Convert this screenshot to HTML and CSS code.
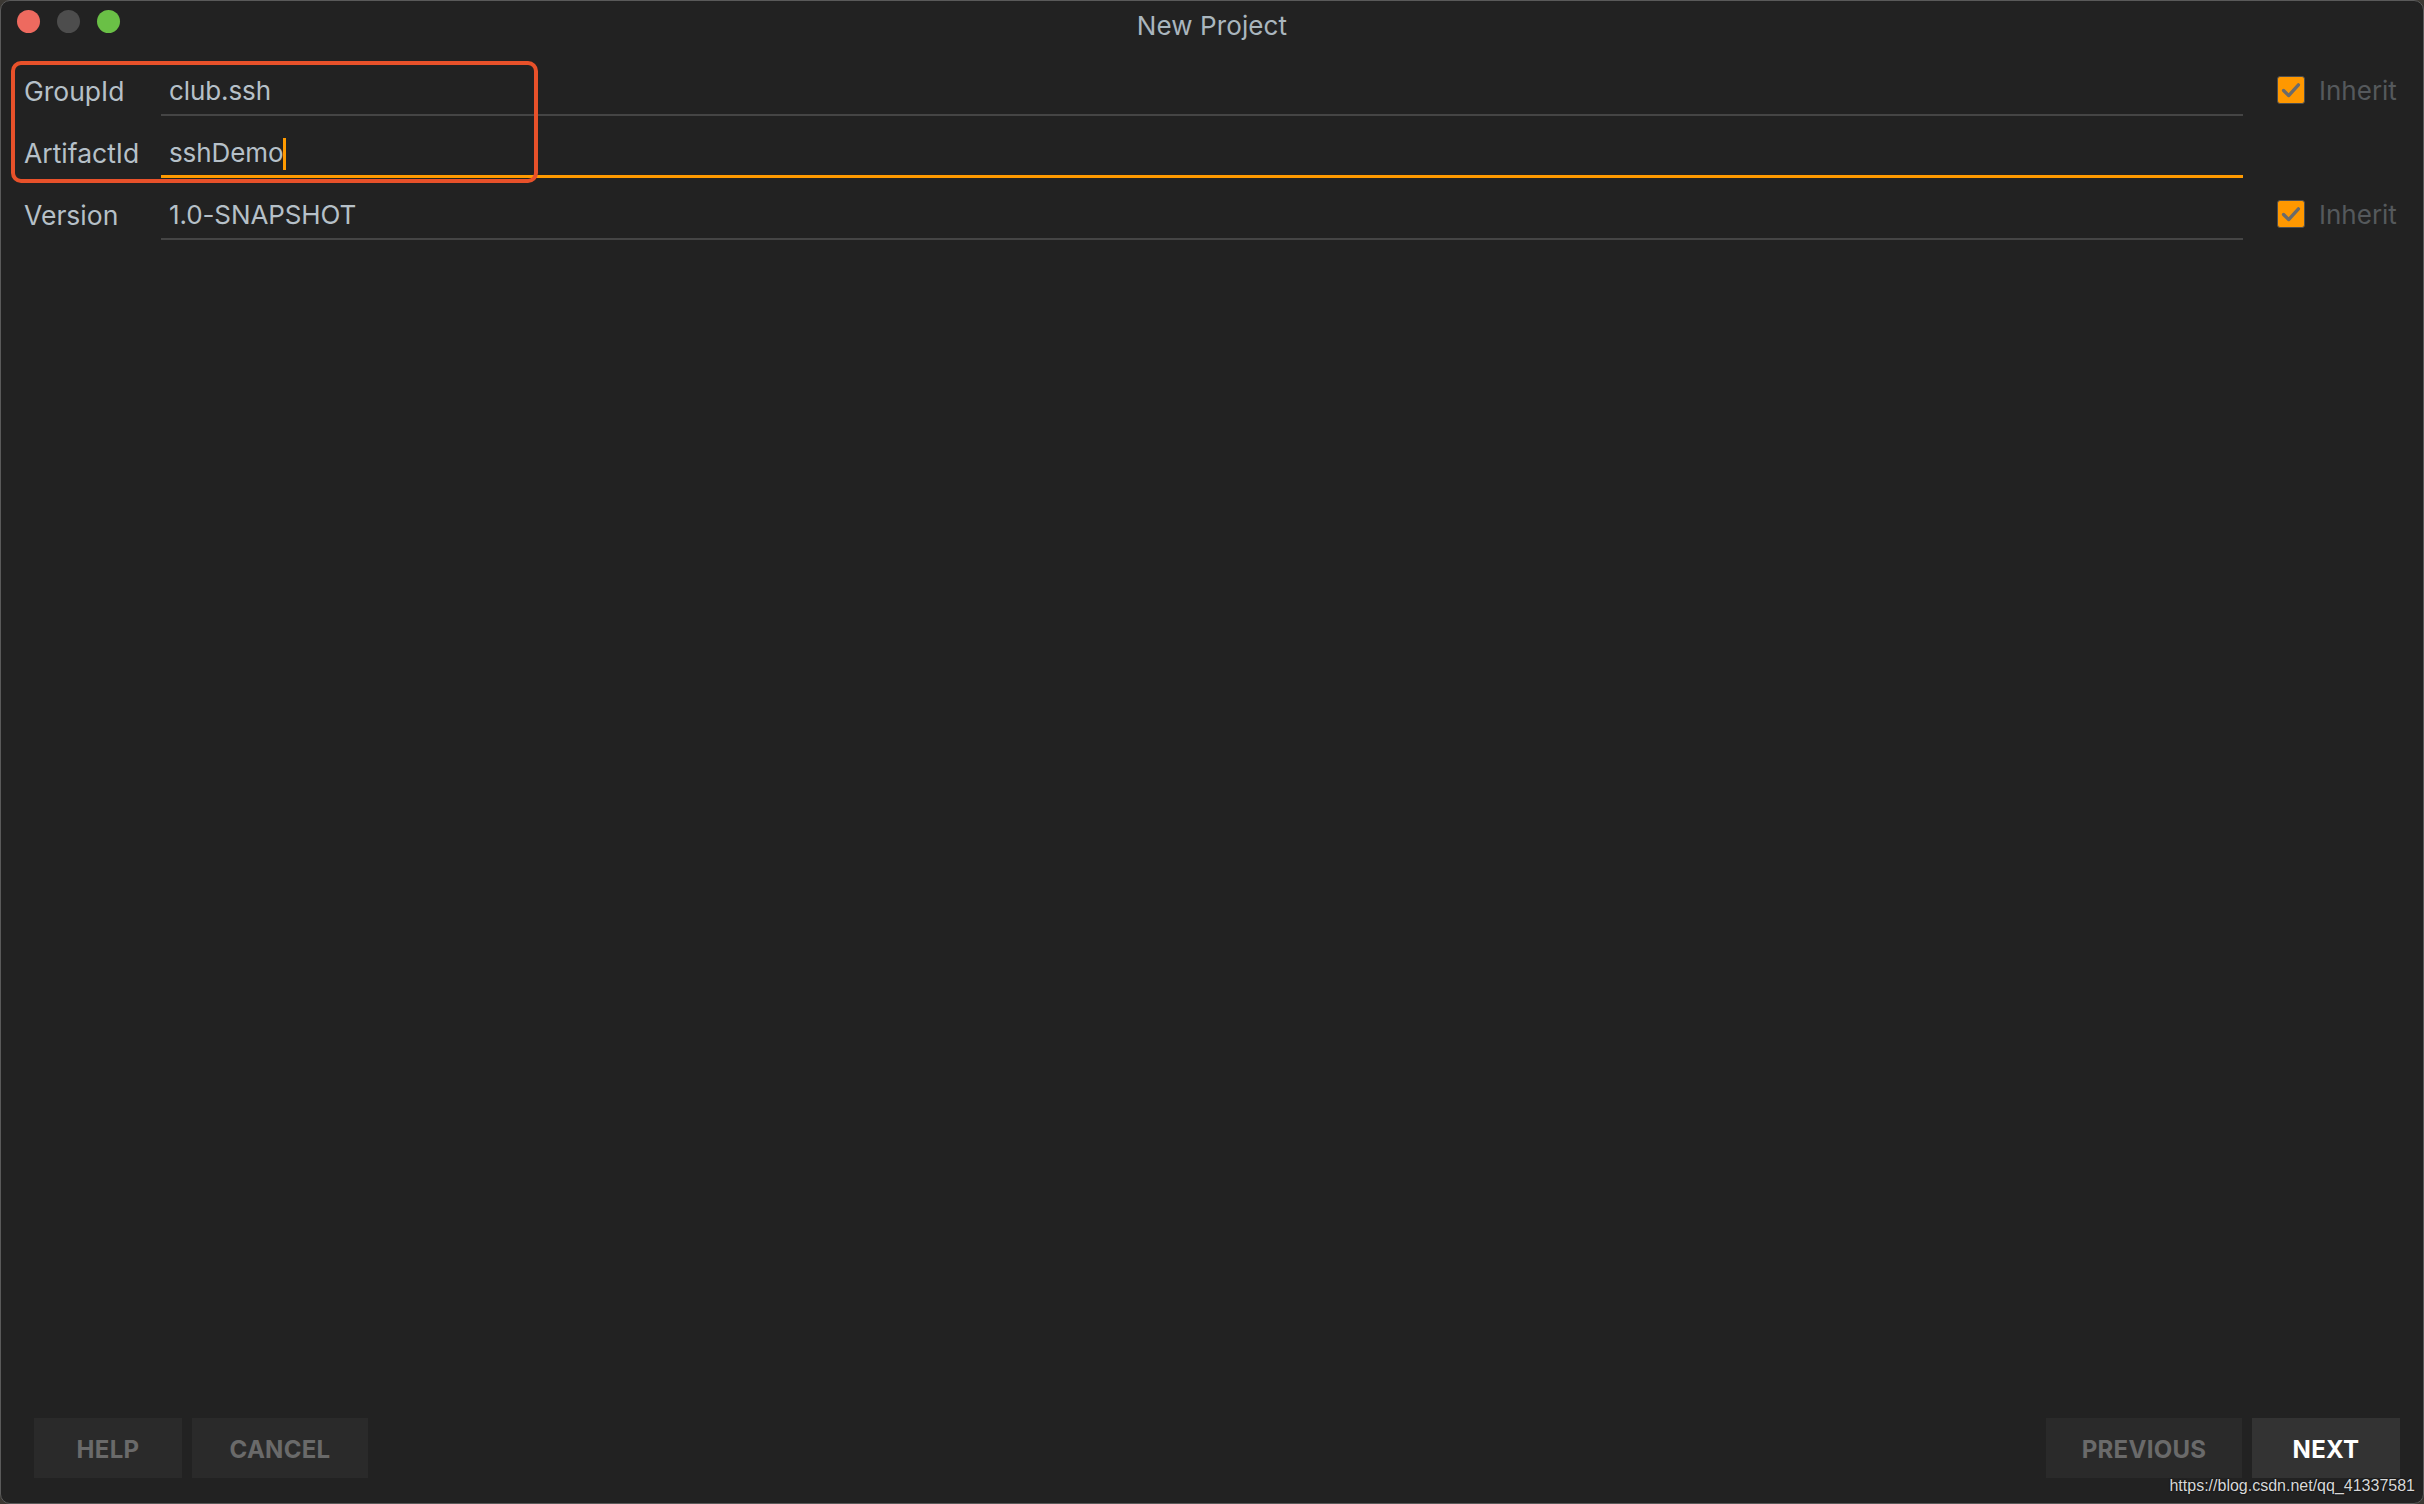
FILE: index.html
```html
<!DOCTYPE html>
<html lang="en">
<head>
<meta charset="utf-8">
<title>New Project</title>
<link rel="stylesheet" href="styles.css">
</head>
<body>
<div class="window">
  <header class="titlebar">
    <div class="lights">
      <span class="light red"></span>
      <span class="light grey"></span>
      <span class="light green"></span>
    </div>
    <div class="title">New Project</div>
    <div class="spacer"></div>
  </header>

  <main class="form">
    <div class="highlight"></div>
    <div class="row">
      <label class="label">GroupId</label>
      <div class="field">club.ssh</div>
      <div class="inherit">
        <span class="check">
          <svg viewBox="0 0 28 28" width="28" height="28"><path d="M6 14.5 L11.5 20 L22 8.5" fill="none" stroke="#6b6b6b" stroke-width="3.6" stroke-linecap="round" stroke-linejoin="round"/></svg>
        </span>
        <span class="inherit-text">Inherit</span>
      </div>
    </div>
    <div class="row">
      <label class="label">ArtifactId</label>
      <div class="field active">sshDemo<span class="caret"></span></div>
      <div class="inherit"></div>
    </div>
    <div class="row">
      <label class="label">Version</label>
      <div class="field">1.0-SNAPSHOT</div>
      <div class="inherit">
        <span class="check">
          <svg viewBox="0 0 28 28" width="28" height="28"><path d="M6 14.5 L11.5 20 L22 8.5" fill="none" stroke="#6b6b6b" stroke-width="3.6" stroke-linecap="round" stroke-linejoin="round"/></svg>
        </span>
        <span class="inherit-text">Inherit</span>
      </div>
    </div>
  </main>

  <footer class="buttons">
    <div class="group">
      <button class="btn help">HELP</button>
      <button class="btn cancel">CANCEL</button>
    </div>
    <div class="group">
      <button class="btn previous">PREVIOUS</button>
      <button class="btn next">NEXT</button>
    </div>
  </footer>
  <div class="watermark">https://blog.csdn.net/qq_41337581</div>
</div>
</body>
</html>
```

FILE: styles.css
```css
html, body {
  margin: 0;
  padding: 0;
  background: #3b3833;
}
body {
  width: 2424px;
  height: 1504px;
  overflow: hidden;
  font-family: Inter, "Noto Sans", "Liberation Sans", sans-serif;
}
.window {
  position: relative;
  box-sizing: border-box;
  width: 2424px;
  height: 1504px;
  background: #222222;
  border: 1px solid #5a5a5a;
  border-radius: 10px;
  display: flex;
  flex-direction: column;
  overflow: hidden;
}
.titlebar {
  display: grid;
  grid-template-columns: 1fr auto 1fr;
  align-items: start;
  height: 44px;
  box-sizing: border-box;
}
.lights {
  display: flex;
  gap: 17px;
  padding: 9px 0 0 16px;
}
.light {
  width: 23px;
  height: 23px;
  border-radius: 50%;
  display: block;
}
.light.red { background: #ee6a5f; }
.light.grey { background: #4d4d4d; }
.light.green { background: #6ac046; }
.title {
  padding-top: 5px;
  font-size: 26px;
  line-height: 40px;
  color: #aab6be;
  letter-spacing: 0.1px;
}
.form {
  position: relative;
  padding-top: 9px;
  display: flex;
  flex-direction: column;
  flex: 1;
}
.highlight {
  position: absolute;
  left: 10px;
  top: 16px;
  width: 527px;
  height: 122px;
  box-sizing: border-box;
  border: 4px solid #e8512a;
  border-radius: 10px;
  pointer-events: none;
}
.row {
  display: grid;
  grid-template-columns: 137px 2082px 1fr;
  padding-left: 23px;
  height: 62px;
}
.label {
  padding-top: 21px;
  font-size: 26.5px;
  line-height: 32px;
  color: #b6c0c8;
}
.field {
  box-sizing: border-box;
  padding: 21px 0 0 8px;
  font-size: 26px;
  line-height: 32px;
  color: #b6c0c8;
  border-bottom: 2px solid #454545;
  height: 62px;
  display: flex;
  align-items: flex-start;
  letter-spacing: -0.1px;
}
.field.active {
  border-bottom: 3px solid #ff9a00;
  height: 62px;
  margin-bottom: -1px;
}
.caret {
  display: inline-block;
  width: 3px;
  height: 32px;
  background: #ff9a00;
  margin-top: 1px;
}
.inherit {
  display: flex;
  align-items: flex-start;
  padding-left: 34px;
  gap: 14px;
}
.check {
  margin-top: 22px;
  width: 28px;
  height: 28px;
  box-sizing: border-box;
  background: #ff9800;
  border: 1px solid #4e4e4e;
  border-radius: 3px;
  display: flex;
  align-items: center;
  justify-content: center;
}
.check svg {
  display: block;
}
.inherit-text {
  padding-top: 21px;
  font-size: 26px;
  line-height: 32px;
  color: #55595c;
}
.buttons {
  display: flex;
  justify-content: space-between;
  padding: 0 23px 25px 33px;
}
.group {
  display: flex;
  gap: 10px;
}
.btn {
  height: 60px;
  border: none;
  background: #2a2a2a;
  color: #6a6a6a;
  font-family: Inter, "Liberation Sans", sans-serif;
  font-weight: 700;
  font-size: 24px;
  letter-spacing: 0.3px;
  padding: 2px 0 0;
}
.btn.help { width: 148px; }
.btn.cancel { width: 176px; }
.btn.previous { width: 196px; }
.btn.next {
  width: 148px;
  background: #333333;
  color: #ffffff;
}
.watermark {
  position: absolute;
  right: 8px;
  bottom: 7px;
  font-family: "Liberation Sans", Arial, sans-serif;
  font-size: 16px;
  line-height: 20px;
  color: #d8d8d8;
  text-shadow: 0 0 2px #000;
}
```
